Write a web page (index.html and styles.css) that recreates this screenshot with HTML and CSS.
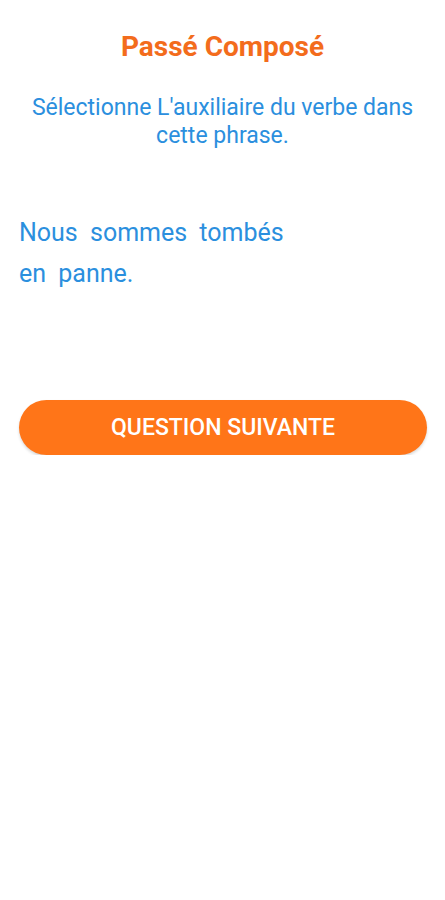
FILE: index.html
```html
<!DOCTYPE html>
<html lang="fr">
<head>
<meta charset="utf-8">
<link rel="stylesheet" href="styles.css">
</head>
<body>
<main class="screen">
  <h1 class="title">Passé Composé</h1>
  <p class="instruction">Sélectionne L'auxiliaire du verbe dans cette phrase.</p>
  <p class="sentence">Nous sommes tombés<br>en panne.</p>
  <button class="next">QUESTION SUIVANTE</button>
</main>
</body>
</html>
```
FILE: styles.css
```css
html, body {
  margin: 0;
  padding: 0;
  background: #ffffff;
}
body {
  font-family: Roboto, "Noto Sans", sans-serif;
}
.screen {
  display: flex;
  flex-direction: column;
  padding: 0 19px 0 19px;
}
.title {
  margin: 31px 0 0 0;
  text-align: center;
  font-size: 28px;
  line-height: 32px;
  font-weight: 700;
  color: #f36c1c;
}
.instruction {
  margin: 31px 0 0 0;
  text-align: center;
  font-size: 23px;
  line-height: 28px;
  color: #2b8fde;
}
.sentence {
  margin: 62px 0 0 0;
  font-size: 25px;
  line-height: 41px;
  word-spacing: 6px;
  color: #2b8fde;
}
.next {
  margin-top: 106px;
  height: 55px;
  width: 408px;
  border: none;
  border-radius: 28px;
  background: #ff7518;
  color: #ffffff;
  font-family: Roboto, sans-serif;
  font-size: 23px;
  font-weight: 500;
  box-shadow: 0 2px 3px rgba(0,0,0,0.15);
}
```
